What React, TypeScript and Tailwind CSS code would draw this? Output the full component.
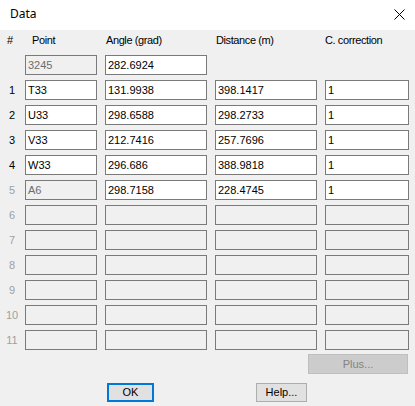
import React from "react";

type Row = {
  n: string;
  numOn: boolean;
  point: string;
  pointOn: boolean;
  angle: string;
  angleOn: boolean;
  dist: string;
  distOn: boolean;
  corr: string;
  corrOn: boolean;
};

const rows: Row[] = [
  { n: "", numOn: true, point: "3245", pointOn: false, angle: "282.6924", angleOn: true, dist: "", distOn: false, corr: "", corrOn: false },
  { n: "1", numOn: true, point: "T33", pointOn: true, angle: "131.9938", angleOn: true, dist: "398.1417", distOn: true, corr: "1", corrOn: true },
  { n: "2", numOn: true, point: "U33", pointOn: true, angle: "298.6588", angleOn: true, dist: "298.2733", distOn: true, corr: "1", corrOn: true },
  { n: "3", numOn: true, point: "V33", pointOn: true, angle: "212.7416", angleOn: true, dist: "257.7696", distOn: true, corr: "1", corrOn: true },
  { n: "4", numOn: true, point: "W33", pointOn: true, angle: "296.686", angleOn: true, dist: "388.9818", distOn: true, corr: "1", corrOn: true },
  { n: "5", numOn: false, point: "A6", pointOn: false, angle: "298.7158", angleOn: true, dist: "228.4745", distOn: true, corr: "1", corrOn: true },
  ...["6", "7", "8", "9", "10", "11"].map((n) => ({
    n, numOn: false, point: "", pointOn: false, angle: "", angleOn: false, dist: "", distOn: false, corr: "", corrOn: false,
  })),
];

function Box({ value, on, w }: { value: string; on: boolean; w: string }) {
  return (
    <div
      className={`${w} h-[20px] border border-[#7a7a7a] flex items-center pl-[2px] leading-none ${
        on ? "bg-white text-black" : "bg-[#f0f0f0] text-[#6d6d6d]"
      }`}
    >
      {value}
    </div>
  );
}

export default function App() {
  return (
    <div
      className="w-[415px] h-[406px] bg-[#f0f0f0] flex flex-col text-[11px] text-black overflow-hidden"
      style={{ fontFamily: '"Liberation Sans", Arial, sans-serif' }}
    >
      <div className="h-[30px] bg-white flex items-center justify-between pl-[10px] pr-[10px] shrink-0">
        <span className="text-[12px] pb-[2px]" style={{ fontFamily: '"Noto Sans", "Open Sans", sans-serif' }}>
          Data
        </span>
        <svg width="11" height="11" viewBox="0 0 11 11" className="mb-[1px]">
          <path d="M0.5 0.5 L10.5 10.5 M10.5 0.5 L0.5 10.5" stroke="#000" strokeWidth="1" fill="none" />
        </svg>
      </div>
      <div className="flex flex-col gap-[5px] mt-[1px]">
        <div className="h-[19px] flex items-center tracking-[-0.4px]">
          <div className="w-[25px] pl-[7px]">#</div>
          <div className="w-[80px] pl-[7px]">Point</div>
          <div className="w-[110px] pl-[1px]">Angle (grad)</div>
          <div className="w-[110px] pl-[1px]">Distance (m)</div>
          <div className="w-[84px]">C. correction</div>
        </div>
        {rows.map((r, i) => (
          <div key={i} className="flex items-center h-[20px]">
            <div className={`w-[25px] text-center pr-[1px] ${r.numOn ? "text-black" : "text-[#a0a0a0]"}`}>{r.n}</div>
            <div className="flex gap-[8px]">
              <Box value={r.point} on={r.pointOn} w="w-[72px]" />
              <Box value={r.angle} on={r.angleOn} w="w-[102px]" />
              {i === 0 ? (
                <>
                  <div className="w-[102px]" />
                  <div className="w-[84px]" />
                </>
              ) : (
                <>
                  <Box value={r.dist} on={r.distOn} w="w-[102px]" />
                  <Box value={r.corr} on={r.corrOn} w="w-[84px]" />
                </>
              )}
            </div>
          </div>
        ))}
      </div>
      <div className="flex justify-end pr-[7px] mt-[4px]">
        <div className="w-[100px] h-[20px] bg-[#cccccc] border border-[#bfbfbf] flex items-center justify-center text-[#838383]">
          Plus...
        </div>
      </div>
      <div className="flex mt-[9px]">
        <div className="ml-[107px] w-[47px] h-[19px] bg-[#e1e1e1] border-2 border-[#0078d7] flex items-center justify-center">
          OK
        </div>
        <div className="ml-[102px] w-[51px] h-[19px] bg-[#e1e1e1] border border-[#adadad] flex items-center justify-center">
          Help...
        </div>
      </div>
    </div>
  );
}
